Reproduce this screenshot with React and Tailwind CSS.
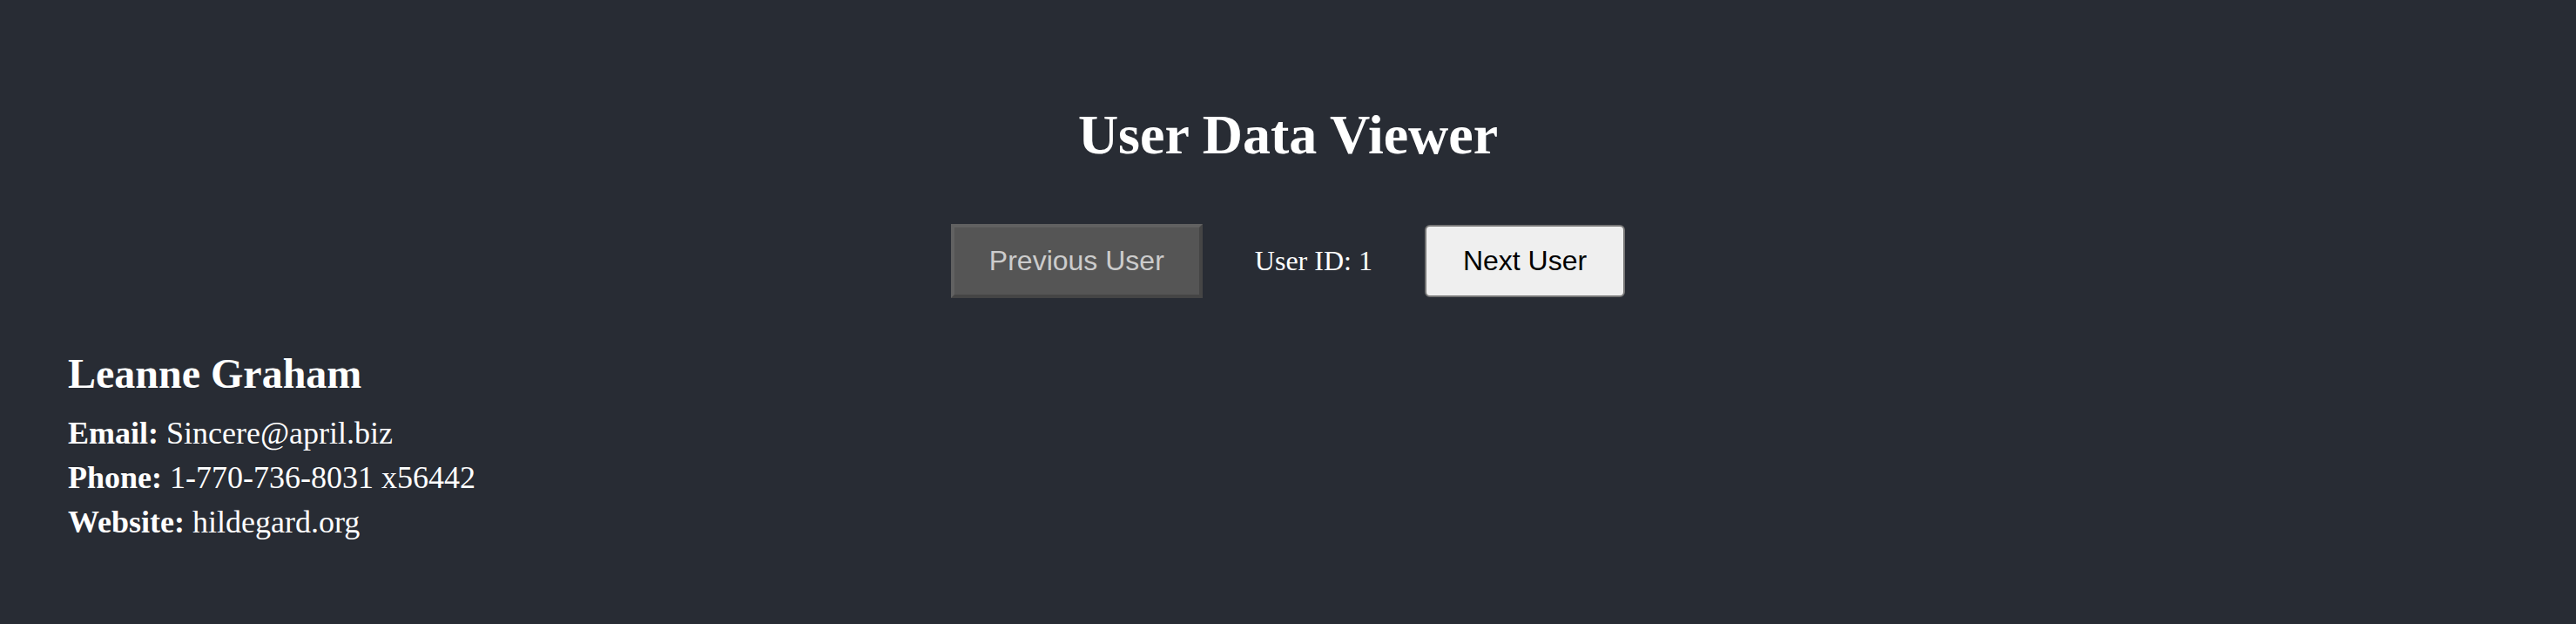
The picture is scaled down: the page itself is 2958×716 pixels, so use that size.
import { useState } from 'react'

const USERS = [
  { id: 1, name: 'Leanne Graham', email: 'Sincere@april.biz', phone: '1-770-736-8031 x56442', website: 'hildegard.org' },
]

export default function App() {
  const [id] = useState(1)
  const user = USERS.find(u => u.id === id)

  return (
    <div className="min-h-[716px] bg-[#282c34] text-white font-['Liberation_Serif','Times_New_Roman',serif]">
      <h1 className="pt-[119px] text-center text-[64px] leading-[72px] font-bold">User Data Viewer</h1>

      <div className="mt-[66px] flex items-center justify-center">
        <button disabled
          className="px-[40px] py-[20px] text-[32px] leading-[37px] font-['Liberation_Sans',Arial,sans-serif] bg-[#555555] text-[#cccccc] border-4 border-t-[#616161] border-l-[#616161] border-b-[#454545] border-r-[#454545] cursor-not-allowed">
          Previous User
        </button>
        <span className="mx-[60px] text-[32px] leading-[37px]">User ID: {id}</span>
        <button
          className="px-[42px] py-[21px] text-[32px] leading-[37px] font-['Liberation_Sans',Arial,sans-serif] bg-[#efefef] text-black border-2 border-[#767676] rounded-[6px]">
          Next User
        </button>
      </div>

      {user && (
        <div className="pl-[78px] mt-[59px]">
          <h2 className="text-[48px] leading-[55px] font-bold">{user.name}</h2>
          <div className="mt-[16px] text-[36px] leading-[51px]">
            <p><strong>Email:</strong> {user.email}</p>
            <p><strong>Phone:</strong> {user.phone}</p>
            <p><strong>Website:</strong> {user.website}</p>
          </div>
        </div>
      )}
    </div>
  )
}
